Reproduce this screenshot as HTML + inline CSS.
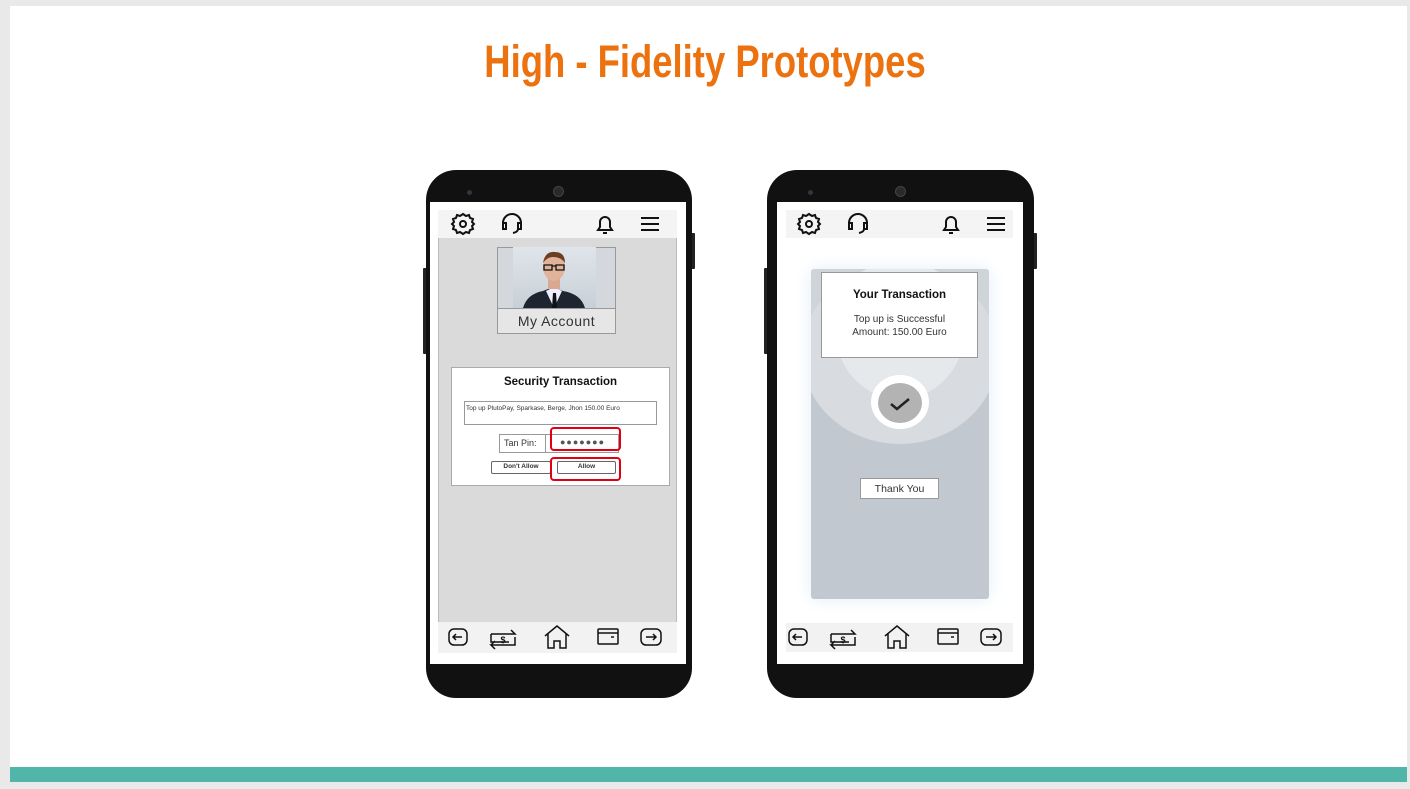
<!DOCTYPE html>
<html><head><meta charset="utf-8"><style>
*{margin:0;padding:0;box-sizing:border-box}
body{width:1410px;height:789px;background:#e9e9e9;position:relative;overflow:hidden;font-family:"Liberation Sans",sans-serif}
.slide{position:absolute;left:10px;top:6px;width:1397px;height:776px;background:#fff}
.abs{position:absolute}
.title{position:absolute;left:0;width:1410px;top:36px;text-align:center;color:#ec7210;font-weight:bold;font-size:45px;transform:scaleX(0.81);letter-spacing:0px}
.teal{position:absolute;left:10px;top:767px;width:1397px;height:15px;background:#52b5a9}
.phone{position:absolute;background:#111;border-radius:30px}
.btnside{position:absolute;background:#222;width:4px;border-radius:1px}
.ic{position:absolute}
</style></head><body>
<div class="slide"></div>
<div class="title">High - Fidelity Prototypes</div>
<div class="teal"></div>

<!-- Phone 1 -->
<div class="btnside" style="left:691px;top:233px;height:36px"></div>
<div class="btnside" style="left:423px;top:268px;height:86px"></div>
<div class="phone" style="left:426px;top:170px;width:266px;height:528px"></div>
<div class="abs" style="left:467px;top:190px;width:5px;height:5px;border-radius:50%;background:#334"></div>
<div class="abs" style="left:553px;top:186px;width:11px;height:11px;border-radius:50%;background:#2a2a2a;border:1px solid #444"></div>
<div class="abs" style="left:430px;top:202px;width:256px;height:462px;background:#fff"></div>
<div class="abs" style="left:438px;top:210px;width:239px;height:415px;background:#dadada;border:1px solid #bbb"></div>
<div class="abs" style="left:438px;top:210px;width:239px;height:28px;background:#f4f4f4"></div>
<div class="abs" style="left:438px;top:622px;width:239px;height:31px;background:#f2f2f2"></div>

<!-- Phone 2 -->
<div class="btnside" style="left:1033px;top:233px;height:36px"></div>
<div class="btnside" style="left:764px;top:268px;height:86px"></div>
<div class="phone" style="left:767px;top:170px;width:267px;height:528px"></div>
<div class="abs" style="left:808px;top:190px;width:5px;height:5px;border-radius:50%;background:#334"></div>
<div class="abs" style="left:895px;top:186px;width:11px;height:11px;border-radius:50%;background:#2a2a2a;border:1px solid #444"></div>
<div class="abs" style="left:777px;top:202px;width:246px;height:462px;background:#fff"></div>
<div class="abs" style="left:786px;top:210px;width:227px;height:28px;background:#f4f4f4"></div>
<div class="abs" style="left:786px;top:623px;width:227px;height:29px;background:#f2f2f2"></div>

<svg class="ic" style="left:0;top:0" width="1410" height="789" viewBox="0 0 1410 789" fill="none" stroke="#111" stroke-width="2">
<g id="top1">
 <circle cx="463" cy="224" r="3" />
 <path d="M463 214 l3 2 3-1 1 3 3 1-1 3 2 2-2 2 1 3-3 1-1 3-3-1-3 2-3-2-3 1-1-3-3-1 1-3-2-2 2-2-1-3 3-1 1-3 3 1z"/>
 <path d="M503 227 v-4 a9 9 0 0 1 18 0 v4 M503 223 h3 v6 h-3 z M521 223 h-3 v6 h3z M518 229 q0 3 -5 4"/>
 <path d="M598 230 h14 l-2-3 v-5 a5 5 0 0 0 -10 0 v5 z M603 233 h4"/>
 <path d="M641 218 h18 M641 224 h18 M641 230 h18"/>
</g>
<g transform="translate(346,0)">
 <circle cx="463" cy="224" r="3" />
 <path d="M463 214 l3 2 3-1 1 3 3 1-1 3 2 2-2 2 1 3-3 1-1 3-3-1-3 2-3-2-3 1-1-3-3-1 1-3-2-2 2-2-1-3 3-1 1-3 3 1z"/>
 <path d="M503 227 v-4 a9 9 0 0 1 18 0 v4 M503 223 h3 v6 h-3 z M521 223 h-3 v6 h3z M518 229 q0 3 -5 4"/>
 <path d="M598 230 h14 l-2-3 v-5 a5 5 0 0 0 -10 0 v5 z M603 233 h4"/>
 <path d="M641 218 h18 M641 224 h18 M641 230 h18"/>
</g>
<g stroke-width="1.5">
 <rect x="449" y="629" width="18" height="16" rx="5"/><path d="M462 637 h-9 M456 634 l-3 3 3 3"/>
 <path d="M491 634 h24 l-4-4 M491 634 v8 h18 M515 637 v8 h-24 l4 4 M491 645 l4-4"/>
 <text x="503" y="643" font-size="9" fill="#111" stroke="none" text-anchor="middle" font-weight="bold">$</text>
 <path d="M545 636 l12-10 12 10 M548 634 v14 h6 v-7 h6 v7 h6 v-14"/>
 <rect x="598" y="629" width="20" height="15" rx="1"/><path d="M598 633 h20 M611 637 h3" />
 <rect x="641" y="629" width="20" height="16" rx="5"/><path d="M646 637 h10 M653 634 l3 3 -3 3"/>
</g>
<g stroke-width="1.5" transform="translate(340,0)">
 <rect x="449" y="629" width="18" height="16" rx="5"/><path d="M462 637 h-9 M456 634 l-3 3 3 3"/>
 <path d="M491 634 h24 l-4-4 M491 634 v8 h18 M515 637 v8 h-24 l4 4 M491 645 l4-4"/>
 <text x="503" y="643" font-size="9" fill="#111" stroke="none" text-anchor="middle" font-weight="bold">$</text>
 <path d="M545 636 l12-10 12 10 M548 634 v14 h6 v-7 h6 v7 h6 v-14"/>
 <rect x="598" y="629" width="20" height="15" rx="1"/><path d="M598 633 h20 M611 637 h3" />
 <rect x="641" y="629" width="20" height="16" rx="5"/><path d="M646 637 h10 M653 634 l3 3 -3 3"/>
</g>
</svg>

<div class="abs" style="left:497px;top:247px;width:119px;height:87px;background:#d4d8dc;border:1px solid #999"></div>
<div class="abs" style="left:513px;top:247px;width:83px;height:61px;background:linear-gradient(#dfe5ea,#c8d0d7)"></div>
<svg class="abs" style="left:513px;top:247px" width="83" height="61" viewBox="0 0 83 61">
 <path d="M10 61 q4-14 20-17 l10-4 10 4 q18 3 22 17z" fill="#1e2430"/>
 <path d="M33 44 l8 17 8-17 -8-4z" fill="#eef"/>
 <path d="M40 46 h3 l1 15 h-5z" fill="#111"/>
 <rect x="35" y="30" width="12" height="12" fill="#d8a890"/>
 <ellipse cx="41" cy="20" rx="11" ry="14" fill="#e0b39a"/>
 <path d="M30 16 q2-12 12-11 q10 0 10 11 q-4-6 -12-6 q-6 0 -10 6z" fill="#6b3f24"/>
 <path d="M31 18 h8 v5 h-8z M43 18 h8 v5 h-8z M39 19 h4" stroke="#111" stroke-width="1.3" fill="none"/>
</svg>
<div class="abs" style="left:498px;top:308px;width:117px;height:25px;background:#e6e6e6;border-top:1px solid #999;text-align:center;font-size:14px;line-height:24px;color:#333;letter-spacing:0.5px">My Account</div>

<div class="abs" style="left:451px;top:367px;width:219px;height:119px;background:#fff;border:1px solid #aaa"></div>
<div class="abs" style="left:451px;top:376px;width:219px;text-align:center;font-weight:bold;font-size:11.5px;color:#111">Security Transaction</div>
<div class="abs" style="left:464px;top:401px;width:193px;height:24px;border:1px solid #999;font-size:6.5px;padding:3px 1px;color:#333;white-space:nowrap;overflow:hidden">Top up PlutoPay, Sparkase, Berge, Jhon 150.00 Euro</div>
<div class="abs" style="left:499px;top:434px;width:120px;height:19px;border:1px solid #999;font-size:9px;line-height:17px;padding-left:4px;color:#333">Tan Pin:</div>
<div class="abs" style="left:545px;top:434px;width:74px;height:19px;border-left:1px solid #999;font-size:9px;line-height:17px;text-align:center;color:#555;letter-spacing:1px">●●●●●●●</div>
<div class="abs" style="left:550px;top:427px;width:71px;height:24px;border:2.5px solid #e0000f;border-radius:4px"></div>
<div class="abs" style="left:491px;top:461px;width:60px;height:13px;border:1.5px solid #666;border-radius:2px;font-size:6.5px;font-weight:bold;text-align:center;line-height:10px;color:#333">Don't Allow</div>
<div class="abs" style="left:557px;top:461px;width:59px;height:13px;border:1.5px solid #666;border-radius:2px;font-size:6.5px;font-weight:bold;text-align:center;line-height:10px;color:#333">Allow</div>
<div class="abs" style="left:550px;top:457px;width:71px;height:24px;border:2.5px solid #e0000f;border-radius:4px"></div>

<div class="abs" style="left:811px;top:269px;width:178px;height:330px;background:#c2c8cf;border-radius:3px;box-shadow:0 0 18px #e3eef8;overflow:hidden">
 <div class="abs" style="left:-30px;top:-130px;width:238px;height:238px;border-radius:50%;background:#cfd4d9"></div>
 <div class="abs" style="left:-9px;top:-5px;width:196px;height:180px;border-radius:50%;background:#d8dce0"></div>
 <div class="abs" style="left:24px;top:-10px;width:130px;height:140px;border-radius:50%;background:#e6e9ec"></div>
</div>
<div class="abs" style="left:821px;top:272px;width:157px;height:86px;background:#fff;border:1px solid #999"></div>
<div class="abs" style="left:821px;top:289px;width:157px;text-align:center;font-weight:bold;font-size:11.5px;color:#111">Your Transaction</div>
<div class="abs" style="left:821px;top:313px;width:157px;text-align:center;font-size:10px;line-height:13px;color:#333">Top up is Successful<br>Amount: 150.00 Euro</div>
<div class="abs" style="left:871px;top:375px;width:58px;height:54px;border-radius:50%;background:#fff"></div>
<div class="abs" style="left:878px;top:383px;width:44px;height:40px;border-radius:50%;background:#b3b3b3"></div>
<svg class="abs" style="left:878px;top:383px" width="44" height="40"><path d="M13 21 l6 5 12-10" stroke="#222" stroke-width="2.5" fill="none"/></svg>
<div class="abs" style="left:860px;top:478px;width:79px;height:21px;background:#fff;border:1px solid #999;text-align:center;font-size:10.5px;line-height:20px;color:#333">Thank You</div>
</body></html>
